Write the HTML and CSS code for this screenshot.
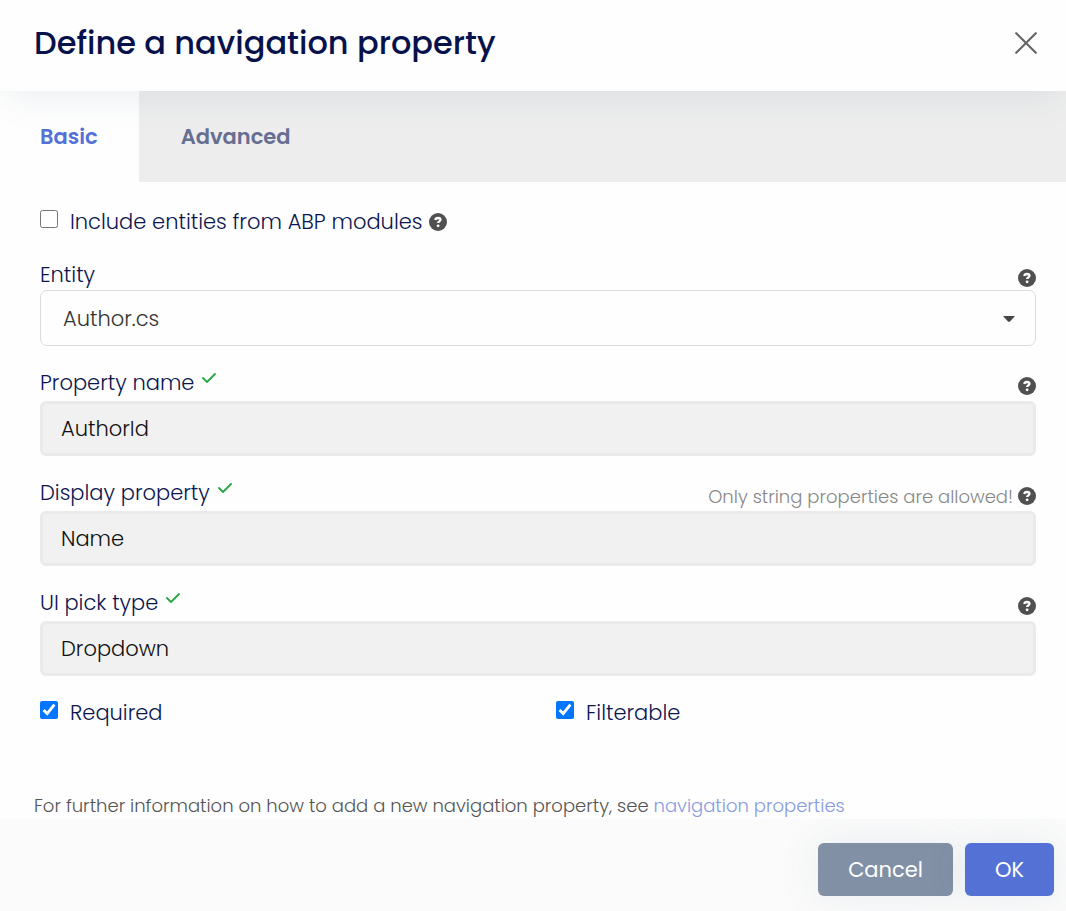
FILE: index.html
```html
<!DOCTYPE html>
<html lang="en">
<head>
<meta charset="utf-8">
<meta name="viewport" content="width=device-width, initial-scale=1">
<title>Define a navigation property</title>
<link rel="stylesheet" href="styles.css">
</head>
<body>
<svg class="sprite" aria-hidden="true">
  <symbol id="help" viewBox="0 0 18 18"><circle cx="9" cy="9" r="9" fill="#505050"/><path d="M6.300 7C6.500 5.500 7.500 5 9 5C10.600 5 11.500 5.700 11.500 6.800C11.500 8.300 9.100 8.400 9.100 10.100" fill="none" stroke="#fff" stroke-width="2.300"/><circle cx="9.100" cy="12.800" r="1.400" fill="#fff"/></symbol>
  <symbol id="check" viewBox="0 0 14 10"><path d="M1 5l4 4 8-8" fill="none" stroke="#28a745" stroke-width="1.800" stroke-linecap="round" stroke-linejoin="round"/></symbol>
</svg>
<main class="dialog">
  <header class="header">
    <h1 class="title">Define a navigation property</h1>
    <button class="close" type="button" aria-label="Close"><svg class="close-icon" viewBox="0 0 22 22"><path d="M1.200 1.200l19.600 19.600M20.800 1.200L1.200 20.800" fill="none" stroke="#666" stroke-width="2.200" stroke-linecap="round"/></svg></button>
  </header>
  <nav class="tabs" role="tablist">
    <button class="tab active" type="button" role="tab" aria-selected="true">Basic</button>
    <button class="tab" type="button" role="tab" aria-selected="false">Advanced</button>
  </nav>
  <form class="form">
    <div class="option include">
      <input class="tick" type="checkbox" id="include">
      <label class="option-label" for="include">Include entities from ABP modules</label>
      <svg class="help"><use href="#help"/></svg>
    </div>
    <div class="field entity">
      <div class="field-head">
        <label class="label" for="entity">Entity</label>
        <svg class="help"><use href="#help"/></svg>
      </div>
      <div class="select-wrap">
        <select class="select" id="entity"><option>Author.cs</option></select>
        <svg class="caret" viewBox="0 0 12 6"><path d="M0 0h12L7 5.400q-1 .9-2 0z" fill="#444"/></svg>
      </div>
    </div>
    <div class="field">
      <div class="field-head">
        <label class="label" for="property">Property name</label>
        <svg class="check"><use href="#check"/></svg>
        <svg class="help"><use href="#help"/></svg>
      </div>
      <input class="input" id="property" type="text" value="AuthorId" readonly>
    </div>
    <div class="field">
      <div class="field-head">
        <label class="label" for="display">Display property</label>
        <svg class="check"><use href="#check"/></svg>
        <span class="note">Only string properties are allowed!</span>
        <svg class="help"><use href="#help"/></svg>
      </div>
      <input class="input" id="display" type="text" value="Name" readonly>
    </div>
    <div class="field">
      <div class="field-head">
        <label class="label" for="pick">UI pick type</label>
        <svg class="check"><use href="#check"/></svg>
        <svg class="help"><use href="#help"/></svg>
      </div>
      <input class="input" id="pick" type="text" value="Dropdown" readonly>
    </div>
    <div class="options">
      <div class="option">
        <input class="tick" type="checkbox" id="required" checked>
        <label class="option-label" for="required">Required</label>
      </div>
      <div class="option">
        <input class="tick" type="checkbox" id="filterable" checked>
        <label class="option-label" for="filterable">Filterable</label>
      </div>
    </div>
  </form>
  <p class="info">For further information on how to add a new navigation property, see <a class="link" href="#">navigation properties</a></p>
  <footer class="footer">
    <button class="button cancel" type="button">Cancel</button>
    <button class="button ok" type="button">OK</button>
  </footer>
</main>
</body>
</html>
```
FILE: styles.css
```css
* { box-sizing: border-box; }
body {
  margin: 0;
  background: #fefefe;
  color: #0b1650;
  font-family: Poppins, Inter, sans-serif;
  font-size: 21px;
  font-weight: 300;
  line-height: 30px;
}
button, input, select { font: inherit; }
button { border: 0; cursor: pointer; }
.sprite { display: none; }
.dialog { display: flex; flex-direction: column; min-height: 100vh; }
.header {
  position: relative;
  z-index: 1;
  display: flex;
  align-items: center;
  justify-content: space-between;
  padding: 23px 29px 28px 34px;
  background: #fefefe;
  box-shadow: 0 8px 40px -8px rgba(80, 105, 135, 0.15);
}
.title { margin: 0; color: #07124c; font-size: 32px; font-weight: 500; line-height: 40px; }
.close { display: flex; padding: 0; background: none; }
.close-icon { width: 22px; height: 22px; }
.tabs { display: flex; background: #ededed; }
.tab {
  padding: 31px 42px 30px;
  background: none;
  color: #666e92;
  font-weight: 600;
}
.tab.active { padding: 31px 41px 30px 40px; background: #fefefe; color: #5471d6; }
.form { padding: 25px 30px 0 40px; }
.option { display: flex; align-items: center; }
.tick { width: 18px; height: 18px; margin: 0 12px 6px 0; accent-color: #0075ff; }
.help { flex: none; width: 18px; height: 18px; margin-left: 7px; }
.field { margin-top: 20px; }
.field-head { display: flex; align-items: center; height: 33px; margin-bottom: 2px; }
.field-head .help { margin: 6px 0 0 auto; }
.entity { margin-top: 23px; }
.entity .field-head { height: 30px; margin-bottom: 0; }
.check { width: 14px; height: 10px; margin: 0 0 10px 8px; }
.note { margin: 8px 0 0 auto; color: #888; font-size: 18px; }
.field-head .note + .help { margin-left: 5px; }
.select-wrap { display: grid; align-items: center; }
.select-wrap > * { grid-area: 1 / 1; }
.select {
  appearance: none;
  width: 100%;
  height: 56px;
  padding: 2px 48px 0 22px;
  border: 1px solid #dcdcdc;
  border-radius: 7px;
  background: #fefefe;
  color: #333;
}
.caret { justify-self: end; width: 12px; height: 6px; margin: 2px 21px 0 0; pointer-events: none; }
.input {
  display: block;
  width: 100%;
  height: 55px;
  padding: 0 18px;
  border: 3px solid #eaeaea;
  border-radius: 6px;
  background: #f1f1f1;
  color: #111;
}
.options { display: grid; grid-template-columns: 1fr 1fr; column-gap: 36px; margin-top: 22px; }
.info { margin: 64px 34px 0; color: #555; font-size: 18px; line-height: 27px; }
.link { color: #879ae2; text-decoration: none; }
.footer {
  display: flex;
  flex: 1;
  align-items: flex-start;
  justify-content: flex-end;
  gap: 12px;
  padding: 24px 12px 15px;
  overflow: hidden;
  background: #fbfbfb;
}
.button {
  padding: 12px 30px 11px;
  border-radius: 6px;
  color: #fff;
  font-weight: 400;
  box-shadow: 0 0 40px rgba(70, 95, 130, 0.1);
}
.cancel { background: #8190a5; }
.ok { background: #5471d6; }
```
